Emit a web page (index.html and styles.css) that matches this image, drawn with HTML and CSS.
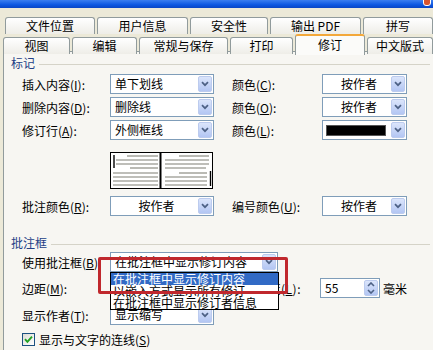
FILE: index.html
```html
<!DOCTYPE html>
<html>
<head>
<meta charset="utf-8">
<link rel="stylesheet" href="styles.css">
</head>
<body>
<div class="win">
  <div class="titlebar"><span class="close"></span></div>
  <div class="tabrow r1">
    <div class="tab">文件位置</div>
    <div class="tab">用户信息</div>
    <div class="tab">安全性</div>
    <div class="tab">输出 PDF</div>
    <div class="tab">拼写</div>
  </div>
  <div class="tabrow r2">
    <div class="tab">视图</div>
    <div class="tab">编辑</div>
    <div class="tab">常规与保存</div>
    <div class="tab">打印</div>
    <div class="tab active">修订</div>
    <div class="tab">中文版式</div>
  </div>
  <div class="panel">
    <div class="legend"><span>标记</span><i></i></div>
    <div class="grid g-mark">
      <label>插入内容(<u>I</u>):</label>
      <div class="select w104"><span class="val">单下划线</span><span class="btn"><svg width="8" height="6" viewBox="0 0 8 6"><path d="M1 1.2 L4 4.2 L7 1.2" fill="none" stroke="#4d6185" stroke-width="1.7"/></svg></span></div>
      <label>颜色(<u>C</u>):</label>
      <div class="select w85 center"><span class="val">按作者</span><span class="btn"><svg width="8" height="6" viewBox="0 0 8 6"><path d="M1 1.2 L4 4.2 L7 1.2" fill="none" stroke="#4d6185" stroke-width="1.7"/></svg></span></div>

      <label>删除内容(<u>D</u>):</label>
      <div class="select w104"><span class="val">删除线</span><span class="btn"><svg width="8" height="6" viewBox="0 0 8 6"><path d="M1 1.2 L4 4.2 L7 1.2" fill="none" stroke="#4d6185" stroke-width="1.7"/></svg></span></div>
      <label>颜色(<u>O</u>):</label>
      <div class="select w85 center"><span class="val">按作者</span><span class="btn"><svg width="8" height="6" viewBox="0 0 8 6"><path d="M1 1.2 L4 4.2 L7 1.2" fill="none" stroke="#4d6185" stroke-width="1.7"/></svg></span></div>

      <label>修订行(<u>A</u>):</label>
      <div class="select w104"><span class="val">外侧框线</span><span class="btn"><svg width="8" height="6" viewBox="0 0 8 6"><path d="M1 1.2 L4 4.2 L7 1.2" fill="none" stroke="#4d6185" stroke-width="1.7"/></svg></span></div>
      <label>颜色(<u>L</u>):</label>
      <div class="select w85"><span class="val"><span class="swatch"></span></span><span class="btn"><svg width="8" height="6" viewBox="0 0 8 6"><path d="M1 1.2 L4 4.2 L7 1.2" fill="none" stroke="#4d6185" stroke-width="1.7"/></svg></span></div>
    </div>
    <div class="preview">
      <svg width="103" height="37" viewBox="0 0 103 37">
        <rect x="0.5" y="0.5" width="102" height="36" fill="#fff" stroke="#000"/>
        <g stroke="#a9a9a2" stroke-width="1.6">
          <line x1="17" y1="4" x2="48" y2="4"/>
          <line x1="6" y1="8" x2="48" y2="8"/>
          <line x1="6" y1="12" x2="48" y2="12"/>
          <line x1="20" y1="16" x2="48" y2="16"/>
          <line x1="3" y1="21" x2="48" y2="21"/>
          <line x1="3" y1="25" x2="48" y2="25"/>
          <line x1="3" y1="29" x2="48" y2="29"/>
          <line x1="3" y1="33" x2="48" y2="33"/>
          <line x1="69" y1="4" x2="99" y2="4"/>
          <line x1="55" y1="8" x2="99" y2="8"/>
          <line x1="55" y1="12" x2="99" y2="12"/>
          <line x1="55" y1="16" x2="96" y2="16"/>
          <line x1="69" y1="21" x2="97" y2="21"/>
          <line x1="55" y1="25" x2="97" y2="25"/>
          <line x1="55" y1="29" x2="97" y2="29"/>
          <line x1="55" y1="33" x2="97" y2="33"/>
        </g>
        <line x1="50.5" y1="0" x2="50.5" y2="37" stroke="#000" stroke-width="2"/>
        <line x1="4" y1="3" x2="4" y2="16" stroke="#000" stroke-width="1.4"/>
        <line x1="100.5" y1="19" x2="100.5" y2="34" stroke="#000" stroke-width="1.4"/>
      </svg>
    </div>
    <div class="grid g-color">
      <label>批注颜色(<u>R</u>):</label>
      <div class="select w104 center"><span class="val">按作者</span><span class="btn"><svg width="8" height="6" viewBox="0 0 8 6"><path d="M1 1.2 L4 4.2 L7 1.2" fill="none" stroke="#4d6185" stroke-width="1.7"/></svg></span></div>
      <label>编号颜色(<u>U</u>):</label>
      <div class="select w85 center"><span class="val">按作者</span><span class="btn"><svg width="8" height="6" viewBox="0 0 8 6"><path d="M1 1.2 L4 4.2 L7 1.2" fill="none" stroke="#4d6185" stroke-width="1.7"/></svg></span></div>
    </div>

    <div class="legend l2"><span>批注框</span><i></i></div>
    <div class="row r-use">
      <label>使用批注框(<u>B</u>):</label>
      <div class="select w168"><span class="val">在批注框中显示修订内容</span><span class="btn"><svg width="8" height="6" viewBox="0 0 8 6"><path d="M1 1.2 L4 4.2 L7 1.2" fill="none" stroke="#4d6185" stroke-width="1.7"/></svg></span></div>
    </div>
    <div class="row r-margin">
      <label>边距(<u>M</u>):</label>
      <span class="width-label">宽度(<u>L</u>):</span>
      <div class="spin"><span class="val">55</span><span class="spinbtns"><span><svg width="8" height="5" viewBox="0 0 8 5"><path d="M1 4 L4 1 L7 4" fill="none" stroke="#4d6185" stroke-width="1.6"/></svg></span><span><svg width="8" height="5" viewBox="0 0 8 5"><path d="M1 1 L4 4 L7 1" fill="none" stroke="#4d6185" stroke-width="1.6"/></svg></span></span></div>
      <span class="unit">毫米</span>
    </div>
    <div class="row r-author">
      <label>显示作者(<u>T</u>):</label>
      <div class="select w104"><span class="val">显示缩写</span><span class="btn"><svg width="8" height="6" viewBox="0 0 8 6"><path d="M1 1.2 L4 4.2 L7 1.2" fill="none" stroke="#4d6185" stroke-width="1.7"/></svg></span></div>
    </div>
    <div class="row r-check">
      <span class="checkbox"><svg width="11" height="11" viewBox="0 0 11 11"><path d="M2 5.2 L4.4 7.8 L9 2.6" fill="none" stroke="#21a121" stroke-width="1.9"/></svg></span>
      <span>显示与文字的连线(<u>S</u>)</span>
    </div>
  </div>

  <ul class="droplist">
    <li class="sel">在批注框中显示修订内容</li>
    <li>以嵌入方式显示所有修订</li>
    <li>在批注框中显示修订者信息</li>
  </ul>
  <div class="redbox"></div>
</div>
</body>
</html>
```
FILE: styles.css
```css
* { box-sizing: border-box; }
html, body { margin: 0; padding: 0; }
body {
  width: 433px;
  height: 350px;
  overflow: hidden;
  font-family: "Noto Sans CJK SC", "DejaVu Sans", sans-serif;
  font-size: 12px;
  color: #000;
}
u { text-decoration: underline; text-underline-offset: 1px; }

.win {
  position: relative;
  width: 433px;
  height: 350px;
  background: #ece9d8;
  overflow: hidden;
}

.titlebar {
  height: 8px;
  background: linear-gradient(to bottom, #3b7ff0 0%, #0d58e2 60%, #0a46c4 100%);
  position: relative;
}
.close {
  position: absolute;
  right: 2px;
  top: -6px;
  width: 8px;
  height: 12px;
  border: 1px solid #fff;
  border-radius: 3px;
  background: #d9552f;
}

.tabrow {
  display: grid;
  height: 17px;
  column-gap: 2px;
  line-height: 16px;
}
.r1 {
  margin-top: 9px;
  padding-left: 5px;
  grid-template-columns: 90px 91px 78px 91px 1fr;
}
.r2 {
  padding-left: 3px;
  grid-template-columns: 67px 65px 89px 63px 70px 1fr;
  align-items: end;
  position: relative;
  z-index: 2;
}
.tab {
  height: 17px;
  border: 1px solid #919b9c;
  border-bottom: none;
  border-radius: 3px 3px 0 0;
  background: linear-gradient(to bottom, #ffffff, #eeede7);
  text-align: center;
  white-space: nowrap;
  overflow: hidden;
}
.tab.active {
  height: 21px;
  margin-bottom: -1px;
  border-top: 2px solid #f3a83a;
  background: #fbfbf9;
  line-height: 17px;
}

.panel {
  margin-left: 3px;
  height: 299px;
  border: 1px solid #919b9c;
  border-right: none;
  border-bottom: none;
  background: #f7f6f2;
  position: relative;
  z-index: 1;
}

.legend {
  display: flex;
  align-items: center;
  height: 14px;
  margin-top: 4px;
  padding-left: 7px;
  gap: 4px;
  color: #243f86;
  line-height: 14px;
}
.legend i {
  flex: 1;
  height: 1px;
  margin-top: 2px;
  margin-right: 3px;
  background: #d5d3c8;
}
.legend.l2 { margin-top: 20px; }

.grid {
  display: grid;
  grid-template-columns: 88px 122px 90px 85px;
  grid-auto-rows: 20px;
  row-gap: 3px;
  padding-left: 18px;
  align-items: center;
}
.g-mark { margin-top: 4px; }
.g-color { margin-top: 7px; }
.grid label, .row label { white-space: nowrap; }

.select {
  display: flex;
  align-items: center;
  height: 20px;
  border: 1px solid #7f9db9;
  background: #fff;
  overflow: hidden;
}
.w104 { width: 104px; }
.w85 { width: 85px; }
.w168 { width: 168px; }
.select .val {
  flex: 1;
  padding-left: 4px;
  white-space: nowrap;
  overflow: hidden;
  line-height: 18px;
}
.select.center .val { text-align: center; }
.btn {
  width: 14px;
  height: 16px;
  margin-right: 1px;
  border: 1px solid #bccbee;
  border-radius: 2px;
  background: linear-gradient(to bottom, #dbe5fb, #b3c6f3);
  display: flex;
  align-items: center;
  justify-content: center;
}
.swatch {
  display: block;
  width: 60px;
  height: 11px;
  margin-left: -1px;
  background: #000;
  border: 1px solid #555;
}

.preview {
  margin-top: 12px;
  padding-left: 106px;
  height: 37px;
}
.preview svg { display: block; }

.row {
  display: flex;
  align-items: center;
  padding-left: 18px;
  height: 20px;
}
.row label { width: 88px; }
.r-use { margin-top: 2px; }
.r-margin { margin-top: 6px; }
.r-author { margin-top: 7px; }
.r-check { margin-top: 7px; height: 14px; }

.width-label {
  width: 210px;
  text-align: right;
  padding-right: 19px;
  white-space: nowrap;
  letter-spacing: 0.5px;
}
.spin {
  display: flex;
  align-items: center;
  width: 60px;
  height: 20px;
  border: 1px solid #7f9db9;
  background: #fff;
}
.spin .val { flex: 1; padding-left: 4px; line-height: 18px; }
.spinbtns {
  width: 14px;
  height: 16px;
  margin-right: 1px;
  display: flex;
  flex-direction: column;
  border: 1px solid #bccbee;
  border-radius: 2px;
  background: linear-gradient(to bottom, #dbe5fb, #b3c6f3);
}
.spinbtns span {
  flex: 1;
  display: flex;
  align-items: center;
  justify-content: center;
}
.unit { margin-left: 3px; }

.checkbox {
  width: 13px;
  height: 13px;
  border: 1px solid #1c5180;
  background: linear-gradient(135deg, #dcdcd5, #ffffff);
  display: flex;
  align-items: center;
  justify-content: center;
  margin-right: 4px;
}

.droplist {
  position: absolute;
  left: 110px;
  top: 272px;
  width: 169px;
  height: 38px;
  margin: 0;
  padding: 0;
  list-style: none;
  background: #fff;
  border: 1px solid #000;
  z-index: 5;
  overflow: hidden;
}
.droplist li {
  height: 12px;
  line-height: 12px;
  padding-left: 2px;
  white-space: nowrap;
}
.droplist li.sel {
  background: #316ac5;
  color: #fff;
}

.redbox {
  position: absolute;
  left: 98px;
  top: 257px;
  width: 190px;
  height: 37px;
  border: 3px solid #c0282d;
  border-radius: 2px;
  z-index: 6;
}
```
